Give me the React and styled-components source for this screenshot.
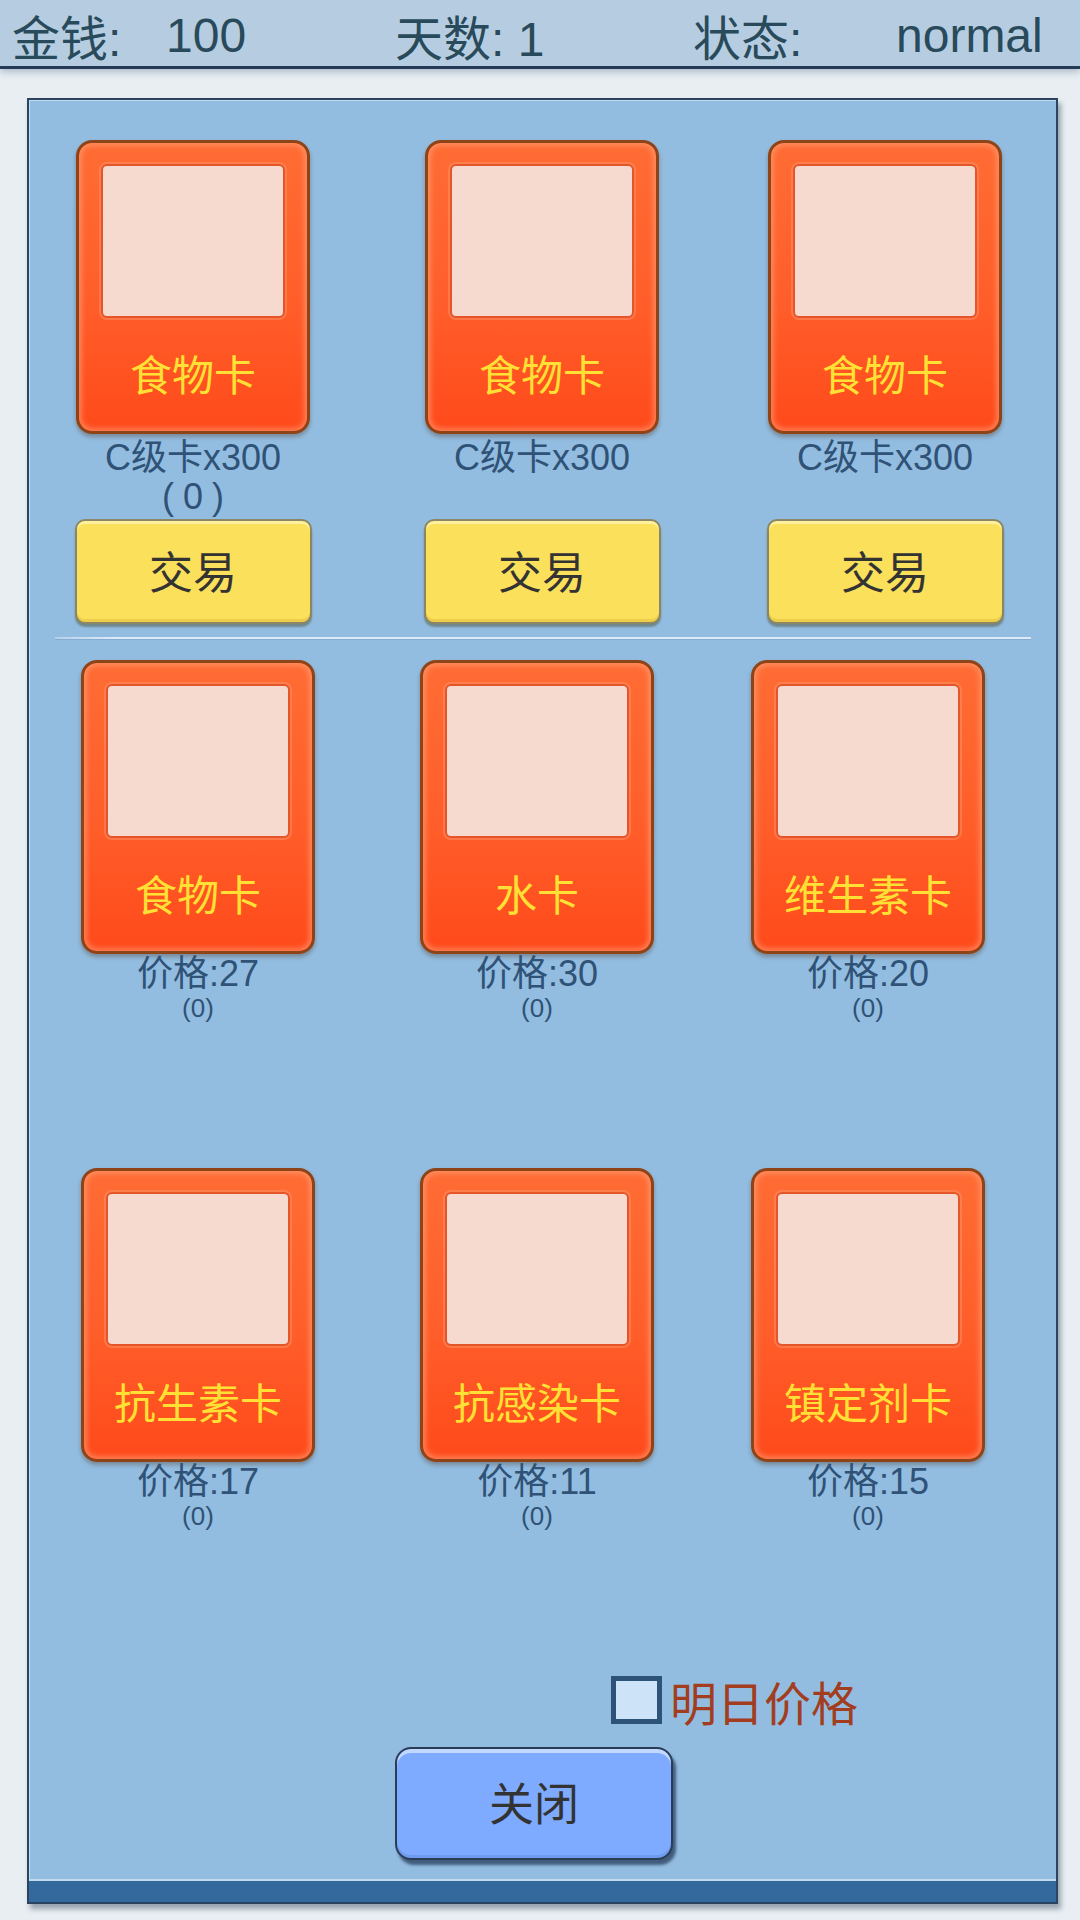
import React from "react";
import styled, { createGlobalStyle } from "styled-components";

const GlobalStyle = createGlobalStyle`
  html, body {
    margin: 0;
    padding: 0;
    background: #e8eef2;
  }
  body {
    font-family: "Liberation Sans", "Noto Sans CJK SC", sans-serif;
  }
  #root {
    width: 1080px;
    height: 1920px;
  }
`;

const Page = styled.div`
  width: 1080px;
  height: 1920px;
  display: flex;
  flex-direction: column;
  background: #e8eef2;
`;

const StatusBar = styled.div`
  height: 69px;
  box-sizing: border-box;
  padding: 0 0 12px 12px;
  display: grid;
  grid-template-columns: 154px 229px 298px 203px auto;
  align-items: center;
  background: #b6cde1;
  border-bottom: 3px solid #243b58;
  box-shadow: 0 3px 7px rgba(40, 70, 110, 0.3);
  color: #284a5a;
  font-size: 48px;
  white-space: pre;
`;

const Panel = styled.div`
  margin: 29px 22px 0 27px;
  height: 1806px;
  box-sizing: border-box;
  border: 2px solid #2b4460;
  background: #93bde0;
  box-shadow: 3px 5px 5px rgba(30, 50, 75, 0.4), inset 1px 1px 0 #c4dcf1;
  display: flex;
  flex-direction: column;
`;

const PanelBody = styled.div`
  flex: 1;
  display: flex;
  flex-direction: column;
  padding-top: 40px;
`;

const OwnedGrid = styled.div`
  display: grid;
  grid-template-columns: 349px 343px 240px;
  justify-items: start;
  padding-left: 44px;
`;

const OwnedSlot = styled.div`
  width: 240px;
  display: flex;
  flex-direction: column;
  align-items: center;
`;

const Card = styled.div`
  width: 234px;
  height: 294px;
  box-sizing: border-box;
  padding: 21px 22px 0;
  border: 3px solid #8d4418;
  border-radius: 16px;
  background: linear-gradient(#ff6c34, #ff5e2a 55%, #ff4a1b);
  box-shadow: inset 0 0 5px 3px rgba(255, 165, 125, 0.55),
    0 3px 4px rgba(70, 40, 20, 0.35);
  display: flex;
  flex-direction: column;
`;

const CardPicture = styled.div`
  height: 154px;
  box-sizing: border-box;
  background: #f6d9cf;
  border: 2px solid #e4562a;
  border-radius: 6px;
  box-shadow: 0 0 0 2px rgba(255, 150, 110, 0.45);
`;

const CardName = styled.div`
  flex: 1;
  display: flex;
  align-items: center;
  justify-content: center;
  padding-bottom: 4px;
  color: #ffe135;
  font-size: 42px;
  white-space: nowrap;
`;

const Caption = styled.div`
  height: 85px;
  box-sizing: border-box;
  padding-top: 4px;
  text-align: center;
  color: #2f5276;
  font-size: 36px;
  line-height: 39px;
`;

const Count = styled.span`
  display: inline-block;
  letter-spacing: 9px;
  padding-left: 9px;
`;

const TradeButton = styled.button`
  width: 237px;
  height: 105px;
  box-sizing: border-box;
  border: 2px solid #8b8666;
  border-radius: 10px;
  background: #fbe05b;
  box-shadow: inset 0 3px 0 #fff09c, inset 0 -3px 0 #ecce4a,
    0 3px 2px rgba(70, 70, 40, 0.45);
  color: #333;
  font-family: inherit;
  font-size: 44px;
  padding: 0 0 4px;
`;

const Divider = styled.div`
  margin: 13px 25px 0 26px;
  height: 2px;
  background: linear-gradient(90deg, #b6d0ea, #dceaf7 6%, #dceaf7);
  border-bottom: 1px solid #84acd2;
`;

const MarketGrid = styled.div`
  margin-top: 20px;
  display: grid;
  grid-template-columns: 339px 331px 234px;
  justify-items: start;
  row-gap: 146px;
  padding-left: 52px;
`;

const MarketSlot = styled.div`
  width: 234px;
  display: flex;
  flex-direction: column;
  align-items: center;
  color: #2f5276;
`;

const Price = styled.div`
  font-size: 36px;
  line-height: 40px;
`;

const Held = styled.div`
  font-size: 26px;
  line-height: 28px;
`;

const TomorrowRow = styled.label`
  margin: 146px 0 0 582px;
  display: flex;
  align-items: center;
  gap: 8px;
  color: #a23e1f;
  font-size: 47px;
  height: 48px;
`;

const CheckBox = styled.span`
  width: 51px;
  height: 48px;
  box-sizing: border-box;
  border: 5px solid #2d5478;
  background: #cde4f8;
`;

const CloseButton = styled.button`
  margin: 23px 0 0 366px;
  width: 278px;
  height: 113px;
  box-sizing: border-box;
  border: 2px solid #2a3d57;
  border-radius: 16px;
  background: #7eaaff;
  box-shadow: inset 0 4px 0 #c2d8ff, inset 0 -3px 0 #6f9bef,
    3px 5px 3px rgba(30, 50, 80, 0.7);
  color: #333;
  font-family: inherit;
  font-size: 45px;
  padding: 0 0 4px;
`;

const BottomBar = styled.div`
  height: 21px;
  background: #34699d;
  border-top: 2px solid #c2dbef;
`;

const owned = [
  { name: "食物卡", note: "C级卡x300", extra: "(0)" },
  { name: "食物卡", note: "C级卡x300" },
  { name: "食物卡", note: "C级卡x300" },
];

const market = [
  { name: "食物卡", price: 27 },
  { name: "水卡", price: 30 },
  { name: "维生素卡", price: 20 },
  { name: "抗生素卡", price: 17 },
  { name: "抗感染卡", price: 11 },
  { name: "镇定剂卡", price: 15 },
];

function GameCard({ name }) {
  return (
    <Card>
      <CardPicture />
      <CardName>{name}</CardName>
    </Card>
  );
}

export default function App() {
  return (
    <Page>
      <GlobalStyle />
      <StatusBar>
        <span>金钱:</span>
        <span>100</span>
        <span>天数: 1</span>
        <span>状态:</span>
        <span>normal</span>
      </StatusBar>
      <Panel>
        <PanelBody>
          <OwnedGrid>
            {owned.map((item, i) => (
              <OwnedSlot key={i}>
                <GameCard name={item.name} />
                <Caption>
                  {item.note}
                  {item.extra && <br />}
                  {item.extra && <Count>{item.extra}</Count>}
                </Caption>
                <TradeButton>交易</TradeButton>
              </OwnedSlot>
            ))}
          </OwnedGrid>
          <Divider />
          <MarketGrid>
            {market.map((item, i) => (
              <MarketSlot key={i}>
                <GameCard name={item.name} />
                <Price>价格:{item.price}</Price>
                <Held>(0)</Held>
              </MarketSlot>
            ))}
          </MarketGrid>
          <TomorrowRow>
            <CheckBox />
            明日价格
          </TomorrowRow>
          <div>
            <CloseButton>关闭</CloseButton>
          </div>
        </PanelBody>
        <BottomBar />
      </Panel>
    </Page>
  );
}
